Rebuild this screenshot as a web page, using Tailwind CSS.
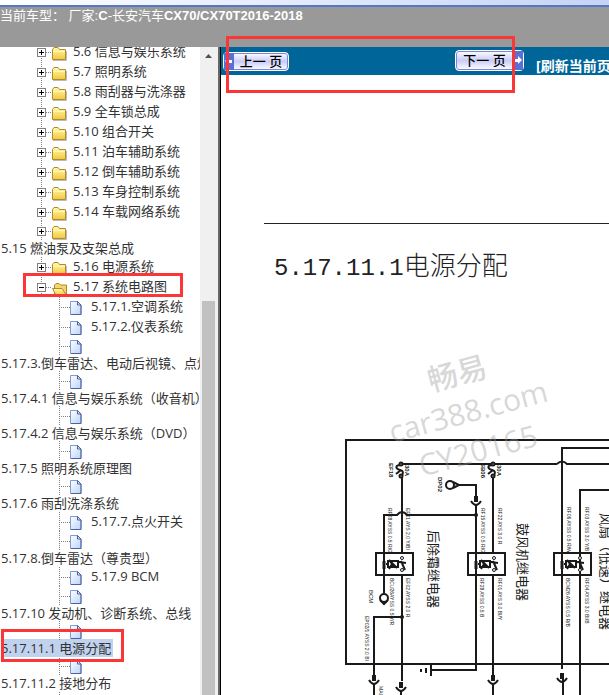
<!DOCTYPE html>
<html lang="zh-CN">

<head>
    <meta charset="UTF-8">
    <meta name="viewport" content="width=device-width, initial-scale=1.0">
    <title>电源分配</title>
    <script src="https://cdn.jsdelivr.net/npm/@tailwindcss/browser@4"></script>
</head>

<body class="flex h-screen flex-col overflow-hidden bg-white font-['Open_Sans','Noto_Sans_CJK_SC',sans-serif] text-[13px] text-[#333]">
    <!-- shared symbols -->
    <svg class="absolute size-0">
        <defs>
            <linearGradient id="gold" x1="0" y1="0" x2="0" y2="1">
                <stop offset="0" stop-color="#fffbb0" />
                <stop offset="1" stop-color="#f3c63c" />
            </linearGradient>
            <linearGradient id="paper" x1="0" y1="0" x2="1" y2="1">
                <stop offset="0" stop-color="#fff" />
                <stop offset="1" stop-color="#b9d3f8" />
            </linearGradient>
            <g id="branch" fill="none" stroke="#808080">
                <path d="M41.5 0V20M46 10.5H52" stroke-dasharray="1 1" />
                <rect x="37.5" y="6.5" width="8" height="8" fill="#fff" />
                <path d="M39 10.5H44" stroke="#000" />
            </g>
            <g id="folder">
                <use href="#branch" />
                <path d="M41.5 8V13" stroke="#000" />
                <path d="M53 18.5H66.5V9" fill="none" stroke="#bbb" />
                <path d="M52.5 17.5V7.5L54 5.5H58L59.5 7.5H65.5V17.5Z" fill="url(#gold)" stroke="#b08a2c" />
                <path d="M53 9.5H65" stroke="#fff6b8" />
            </g>
            <g id="opened">
                <use href="#branch" />
                <path d="M54.5 17V8L56 6.5H59L60.5 8H66.5V17Z" fill="#f3d66b" stroke="#b08a2c" />
                <path d="M52.5 11.5H62L66.5 18.5H56Z" fill="url(#gold)" stroke="#b08a2c" />
            </g>
            <g id="doc">
                <path d="M59.5 0V20M61 10.5H70" stroke="#808080" stroke-dasharray="1 1" />
                <path d="M70.5 4.5H77.5L81 8V17.5H70.5Z" fill="url(#paper)" stroke="#7d9bd8" />
                <path d="M71 17.5H81V8L77.5 4.5V8H81" fill="none" stroke="#4f5f9f" />
            </g>
            <g id="relay" fill="none" stroke="#1a1a1a" stroke-width="2">
                <rect x="0" y="0" width="37" height="22" />
                <path d="M8 0V22" />
                <path d="M8 8V16" stroke-width="3" />
                <path d="M10 11H12M12 8H22V14H12ZM13 16L16 11L13 7L21 15M22 9H25" />
                <path d="M25 8L29 17M23 9L30 10" />
                <circle cx="26" cy="5" r="1.5" stroke-width="1" fill="#fff" />
                <circle cx="26" cy="17" r="1.5" stroke-width="1" fill="#fff" />
            </g>
            <g id="fuse" fill="none" stroke="#1a1a1a" stroke-width="2">
                <path d="M0 1C-7 1 -5 5 -1 6S2 9 1 12" />
                <path d="M-5 10L0 6" />
                <circle cx="0" cy="0" r="1.5" fill="#fff" />
                <circle cx="0" cy="12" r="1.5" fill="#fff" />
            </g>
            <g id="plug" stroke="#1a1a1a" fill="none" stroke-width="2">
                <path d="M0 -4V2" stroke-width="4" />
                <path d="M-5 1Q0 9 5 1" />
            </g>
        </defs>
    </svg>

    <header class="shrink-0">
        <div class="h-[5px] bg-linear-to-r from-white to-[#c6d4f4]"></div>
        <div class="h-0.5 bg-[#5478c8]"></div>
        <div class="h-10 bg-[#999] font-['Liberation_Sans','Noto_Sans_CJK_SC',sans-serif] leading-[18px] whitespace-nowrap text-white">
            当前车型： 厂家:<b>C</b>-长安汽车<b>CX70/CX70T2016-2018</b>
        </div>
    </header>

    <div class="flex min-h-0 flex-1">
        <nav class="w-50 shrink-0 overflow-hidden pl-px whitespace-nowrap">
            <ul class="-mt-[5px]">
                <li class="flex h-5"><svg class="w-[72px]" viewBox="1 0 72 20"><use href="#folder" /></svg><a href="#">5.6 信息与娱乐系统</a></li>
                <li class="flex h-5"><svg class="w-[72px]" viewBox="1 0 72 20"><use href="#folder" /></svg><a href="#">5.7 照明系统</a></li>
                <li class="flex h-5"><svg class="w-[72px]" viewBox="1 0 72 20"><use href="#folder" /></svg><a href="#">5.8 雨刮器与洗涤器</a></li>
                <li class="flex h-5"><svg class="w-[72px]" viewBox="1 0 72 20"><use href="#folder" /></svg><a href="#">5.9 全车锁总成</a></li>
                <li class="flex h-5"><svg class="w-[72px]" viewBox="1 0 72 20"><use href="#folder" /></svg><a href="#">5.10 组合开关</a></li>
                <li class="flex h-5"><svg class="w-[72px]" viewBox="1 0 72 20"><use href="#folder" /></svg><a href="#">5.11 泊车辅助系统</a></li>
                <li class="flex h-5"><svg class="w-[72px]" viewBox="1 0 72 20"><use href="#folder" /></svg><a href="#">5.12 倒车辅助系统</a></li>
                <li class="flex h-5"><svg class="w-[72px]" viewBox="1 0 72 20"><use href="#folder" /></svg><a href="#">5.13 车身控制系统</a></li>
                <li class="flex h-5"><svg class="w-[72px]" viewBox="1 0 72 20"><use href="#folder" /></svg><a href="#">5.14 车载网络系统</a></li>
                <li class="leading-[18px]"><svg class="h-[17px] w-[72px] overflow-visible" viewBox="1 1 72 17"><use href="#folder" /></svg><a href="#" class="block">5.15 燃油泵及支架总成</a></li>
                <li class="flex h-5"><svg class="w-[72px]" viewBox="1 0 72 20"><use href="#folder" /></svg><a href="#">5.16 电源系统</a></li>
                <li class="relative flex h-5">
                    <svg class="w-[72px]" viewBox="1 0 72 20"><use href="#opened" /></svg><a href="#">5.17 系统电路图</a>
                    <span class="absolute -top-1 left-[22px] h-6 w-40 border-3 border-[#fb3636]"></span>
                </li>
                <li class="flex h-5"><svg class="w-[90px]" viewBox="1 0 90 20"><use href="#doc" /></svg><a href="#">5.17.1.空调系统</a></li>
                <li class="flex h-5"><svg class="w-[90px]" viewBox="1 0 90 20"><use href="#doc" /></svg><a href="#">5.17.2.仪表系统</a></li>
                <li class="leading-[18px]"><svg class="h-[17px] w-[90px] overflow-visible" viewBox="1 1 90 17"><use href="#doc" /></svg><a href="#" class="block">5.17.3.倒车雷达、电动后视镜、点烟器</a></li>
                <li class="leading-[18px]"><svg class="h-[17px] w-[90px] overflow-visible" viewBox="1 1 90 17"><use href="#doc" /></svg><a href="#" class="block">5.17.4.1 信息与娱乐系统（收音机）</a></li>
                <li class="leading-[18px]"><svg class="h-[17px] w-[90px] overflow-visible" viewBox="1 1 90 17"><use href="#doc" /></svg><a href="#" class="block">5.17.4.2 信息与娱乐系统（DVD）</a></li>
                <li class="leading-[18px]"><svg class="h-[17px] w-[90px] overflow-visible" viewBox="1 1 90 17"><use href="#doc" /></svg><a href="#" class="block">5.17.5 照明系统原理图</a></li>
                <li class="leading-[18px]"><svg class="h-[17px] w-[90px] overflow-visible" viewBox="1 1 90 17"><use href="#doc" /></svg><a href="#" class="block">5.17.6 雨刮洗涤系统</a></li>
                <li class="flex h-5"><svg class="w-[90px]" viewBox="1 0 90 20"><use href="#doc" /></svg><a href="#">5.17.7.点火开关</a></li>
                <li class="leading-[18px]"><svg class="h-[17px] w-[90px] overflow-visible" viewBox="1 1 90 17"><use href="#doc" /></svg><a href="#" class="block">5.17.8.倒车雷达（尊贵型）</a></li>
                <li class="flex h-5"><svg class="w-[90px]" viewBox="1 0 90 20"><use href="#doc" /></svg><a href="#">5.17.9 BCM</a></li>
                <li class="leading-[18px]"><svg class="h-[17px] w-[90px] overflow-visible" viewBox="1 1 90 17"><use href="#doc" /></svg><a href="#" class="block">5.17.10 发动机、诊断系统、总线</a></li>
                <li class="relative leading-[18px]">
                    <svg class="h-[17px] w-[90px] overflow-visible" viewBox="1 1 90 17"><use href="#doc" /></svg><a href="#" class="block w-fit bg-[#c1d2ee] pr-0.5">5.17.11.1 电源分配</a>
                    <span class="absolute top-[7px] left-0 h-[33px] w-[123px] border-3 border-[#fb3636]"></span>
                </li>
                <li class="leading-[18px]"><svg class="h-[17px] w-[90px] overflow-visible" viewBox="1 1 90 17"><use href="#doc" /></svg><a href="#" class="block">5.17.11.2 接地分布</a></li>
                <li class="flex h-5"><svg class="w-[90px]" viewBox="1 0 90 20"><use href="#doc" /></svg></li>
            </ul>
        </nav>

        <!-- scrollbar of the tree -->
        <div class="flex w-[18px] shrink-0 flex-col bg-[#f0f0f0] pr-[3px] pl-0.5">
            <svg class="h-[17px] w-full" viewBox="0 0 13 17"><path d="M3 11L6.5 7L10 11Z" fill="#505050" /></svg>
            <div class="h-[237px]"></div>
            <div class="flex-1 bg-[#c1c1c1]"></div>
        </div>
        <div class="w-[3px] shrink-0 border-r border-black bg-[#666]"></div>

        <main class="flex min-w-0 flex-1 flex-col">
            <div class="relative flex h-7 shrink-0 items-start bg-[#069] whitespace-nowrap">
                <button class="mt-[5px] ml-0.5 flex h-[19px] w-[66px] shrink-0 items-center rounded-sm border border-white bg-linear-to-b from-white via-[#c9ccf6] to-white font-medium text-black inset-ring inset-ring-[#8084d8]">
                    <svg class="h-full w-[10px] shrink-0" viewBox="0 0 10 17"><path d="M0 0H10V17H0Z" fill="#5b6fd8" /><path d="M1 8L5 4V7H8V10H5V12Z" fill="#fff" /></svg>
                    <span class="flex-1 text-center">上一 页</span>
                </button>
                <button class="mt-[3px] ml-[166px] flex h-[21px] w-[69px] shrink-0 items-center rounded-sm border border-white bg-linear-to-b from-white via-[#c9ccf6] to-white font-medium text-black inset-ring inset-ring-[#8084d8]">
                    <span class="flex-1 text-center">下一 页</span>
                    <svg class="h-full w-[10px] shrink-0" viewBox="0 0 10 19"><path d="M0 0H10V19H0Z" fill="#5b6fd8" /><path d="M9 9L5 5V8H2V11H5V13Z" fill="#fff" /></svg>
                </button>
                <a href="#" class="mt-2.5 ml-3 text-sm leading-[18px] font-bold text-white">[刷新当前页]</a>
                <span class="absolute -top-[11px] left-[5px] z-10 h-[57px] w-[289px] border-3 border-[#fb3636]"></span>
            </div>

            <hr class="mt-37 ml-[43px] border-[#222]">
            <h1 class="pt-7 pb-14 pl-[53px] font-['Liberation_Mono','Noto_Sans_CJK_SC',monospace] text-2xl leading-8 font-light whitespace-nowrap text-[#222]">5.17.11.1<span class="text-[26px]">电源分配</span></h1>

            <svg class="ml-[119px] h-[355px] w-[269px] shrink-0" viewBox="340 340 269 355">
                <!-- wires -->
                <g fill="none" stroke="#1a1a1a" stroke-width="2">
                    <path d="M609 439H346V663H609" />
                    <path d="M402 463H557M557 463Q562 458 567 463H609" />
                    <path d="M609 447H562V668M563 674V695" />
                    <path d="M609 489H580V695" />
                    <path d="M402 475V552M402 574V680M401 689V695" />
                    <path d="M384 592V514H397Q402 508 407 514H476" />
                    <path d="M402 616H374V674M374 683V695" />
                    <path d="M459 484H476V496M476 504V669H431M431 663V675M426 667V672M421 668V671" />
                    <path d="M493 475V552M493 574V674M493 684V695" />
                    <circle cx="384" cy="597" r="4" />
                    <path d="M380 599L384 603L388 599" />
                    <circle cx="450" cy="484" r="4" />
                    <path d="M453 481L459 484L453 487" />
                </g>
                <circle cx="476" cy="514" r="2" fill="#1a1a1a" />
                <circle cx="402" cy="616" r="2" fill="#1a1a1a" />
                <use href="#relay" x="376" y="552" />
                <use href="#relay" x="468" y="552" />
                <use href="#relay" x="554" y="552" />
                <use href="#fuse" x="401" y="463" />
                <use href="#fuse" x="493" y="463" />
                <use href="#plug" x="476" y="499" />
                <use href="#plug" x="374" y="678" />
                <use href="#plug" x="401" y="685" />
                <use href="#plug" x="493" y="678" />
                <use href="#plug" x="562" y="676" />

                <!-- wire codes, turned to run down the page -->
                <g class="font-['Liberation_Sans',sans-serif] text-[5px]" fill="#222">
                    <text transform="translate(388 507) rotate(90)">RF28 AYSS 0.5 R/G</text>
                    <text transform="translate(406 507) rotate(90)">EF01 AYS 2.0 Y/BI</text>
                    <text transform="translate(481 507) rotate(90)">RF15 AYSS 0.5 R/G</text>
                    <text transform="translate(498 507) rotate(90)">RF22 AYS 3.0 R</text>
                    <text transform="translate(567 506) rotate(90)">RF06 AYSS 0.5 R/W</text>
                    <text transform="translate(585 506) rotate(90)">RF03 AYSS 3.0 Y/B</text>
                    <text transform="translate(390 577) rotate(90)">BCU26AYSS 0.5 Y/R</text>
                    <text transform="translate(406 577) rotate(90)">EF02 AYSS 2.0 R</text>
                    <text transform="translate(480 577) rotate(90)">RF28 AYSS 0.5 B</text>
                    <text transform="translate(498 577) rotate(90)">RF01 AYS 3.0 BI/Y</text>
                    <text transform="translate(566 577) rotate(90)">BCM26 AYSS 0.5 R/B</text>
                    <text transform="translate(585 577) rotate(90)">RF04 AYSS 3.0 BI/B</text>
                    <text transform="translate(365 615) rotate(90)">EP02/1 AYSS 2.0 BI</text>
                    <text transform="translate(379 685) rotate(90)">MAC</text>
                </g>
                <g class="font-['Liberation_Sans',sans-serif] text-[6px] font-bold" fill="#1a1a1a">
                    <text transform="translate(389 462) rotate(90)">EF18</text>
                    <text transform="translate(405 464) rotate(90)">30A</text>
                    <text transform="translate(481 462) rotate(90)">SB06</text>
                    <text transform="translate(497 464) rotate(90)">30A</text>
                    <text transform="translate(438 476) rotate(90)">DP02</text>
                </g>
                <text transform="translate(369 589) rotate(90)" class="font-['Liberation_Sans',sans-serif] text-[6px]" fill="#222">BCM</text>
                <g class="font-['Noto_Sans_CJK_SC',sans-serif] text-[13px]" fill="#1a1a1a">
                    <text transform="translate(429 529) rotate(90)">后除霜继电器</text>
                    <text transform="translate(518 522) rotate(90)">鼓风机继电器</text>
                    <text transform="translate(601 512) rotate(90)">风扇（低速）继电器</text>
                </g>

                <!-- watermark -->
                <g class="font-['Open_Sans','Noto_Sans_CJK_SC',sans-serif] text-[30px] font-medium" fill="#999" fill-opacity="0.4" text-anchor="middle">
                    <text transform="translate(460 383) rotate(-15)">畅易</text>
                    <text transform="translate(471 421) rotate(-15)">car388.com</text>
                    <text transform="translate(481 460) rotate(-15)">CY20165</text>
                </g>
            </svg>
        </main>
    </div>
</body>

</html>
